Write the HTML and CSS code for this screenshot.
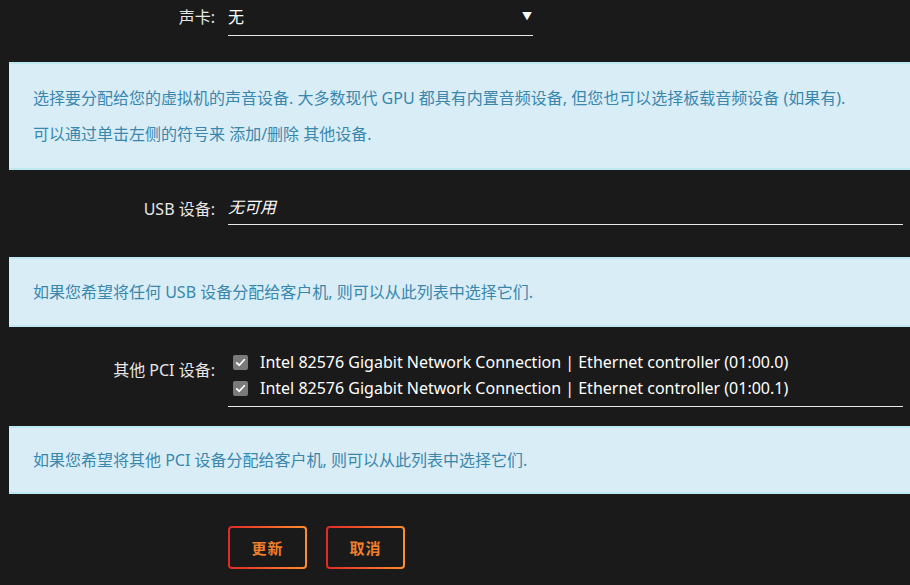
FILE: index.html
```html
<!DOCTYPE html>
<html lang="zh">
<head>
<meta charset="utf-8">
<link rel="stylesheet" href="styles.css">
</head>
<body>
<div class="page">
  <div class="row row-sound">
    <div class="label">声卡:</div>
    <div class="value select">
      <span>无</span>
      <span class="arrow">▼</span>
    </div>
  </div>

  <div class="info info-two">
    <p>选择要分配给您的虚拟机的声音设备. 大多数现代 GPU 都具有内置音频设备, 但您也可以选择板载音频设备 (如果有).</p>
    <p>可以通过单击左侧的符号来 添加/删除 其他设备.</p>
  </div>

  <div class="row row-usb">
    <div class="label">USB 设备:</div>
    <div class="value wide"><em>无可用</em></div>
  </div>

  <div class="info info-usb">
    <p>如果您希望将任何 USB 设备分配给客户机, 则可以从此列表中选择它们.</p>
  </div>

  <div class="row row-pci">
    <div class="label">其他 PCI 设备:</div>
    <div class="value wide checks">
      <div class="check"><span class="box"><svg viewBox="0 0 16 16" width="11" height="11"><path d="M2.5 8.5 L6.2 12 L13.5 4" fill="none" stroke="#fff" stroke-width="2.6" stroke-linecap="round" stroke-linejoin="round"/></svg></span>Intel 82576 Gigabit Network Connection | Ethernet controller (01:00.0)</div>
      <div class="check"><span class="box"><svg viewBox="0 0 16 16" width="11" height="11"><path d="M2.5 8.5 L6.2 12 L13.5 4" fill="none" stroke="#fff" stroke-width="2.6" stroke-linecap="round" stroke-linejoin="round"/></svg></span>Intel 82576 Gigabit Network Connection | Ethernet controller (01:00.1)</div>
    </div>
  </div>

  <div class="info info-pci">
    <p>如果您希望将其他 PCI 设备分配给客户机, 则可以从此列表中选择它们.</p>
  </div>

  <div class="buttons">
    <button class="btn">更新</button>
    <button class="btn">取消</button>
  </div>
</div>
</body>
</html>
```

FILE: styles.css
```css
html, body {
  margin: 0;
  padding: 0;
  background: #1a1a1a;
  overflow: hidden;
}
body {
  font-family: "Noto Sans", "Noto Sans CJK SC", sans-serif;
  font-size: 16px;
  color: #f2f2f2;
}
.page {
  padding-left: 9px;
  width: 901px;
}
.row {
  display: grid;
  grid-template-columns: 206px 1fr;
  column-gap: 13px;
  align-items: start;
}
.label {
  text-align: right;
  color: #e6e6e6;
  line-height: 35px;
}
.value {
  border-bottom: 1px solid #e8e8e8;
  color: #fff;
}
.select {
  width: 305px;
  line-height: 35px;
  display: flex;
  justify-content: space-between;
  box-sizing: border-box;
}
.arrow {
  font-size: 10px;
  padding-right: 1px;
  transform: translateY(-1px);
}
.wide {
  width: 675px;
}
.row-usb {
  margin-top: 20px;
}
.row-usb .label {
  line-height: 30px;
  padding-top: 4px;
}
.row-usb .value {
  line-height: 34px;
}
.row-usb em {
  font-style: italic;
}
.row-pci {
  margin-top: 22px;
}
.row-pci .label {
  line-height: 26px;
  padding-top: 8px;
}
.checks {
  padding-bottom: 5px;
}
.check {
  display: flex;
  align-items: center;
  line-height: 26px;
  white-space: nowrap;
}
.box {
  width: 15px;
  height: 15px;
  border-radius: 2px;
  background: #7a7a7a;
  margin-left: 5px;
  margin-right: 12px;
  display: flex;
  align-items: center;
  justify-content: center;
  flex: none;
}
.info {
  background: #d9edf7;
  border-top: 2px solid #bce8f1;
  border-bottom: 2px solid #bce8f1;
  color: #3a87ad;
  padding: 15px 24px;
  font-size: 16px;
}
.info p {
  margin: 0;
  line-height: 36px;
  white-space: nowrap;
}
.info-two {
  margin-top: 26px;
  padding: 16px 24px;
}
.info-usb {
  margin-top: 32px;
}
.info-pci {
  margin-top: 19px;
  padding: 14px 24px;
}
.buttons {
  display: flex;
  gap: 19px;
  margin-top: 32px;
  margin-left: 219px;
}
.btn {
  width: 79px;
  height: 43px;
  border: 2px solid transparent;
  border-radius: 4px;
  background:
    linear-gradient(#1a1a1a, #1a1a1a) padding-box,
    linear-gradient(90deg, #e22828, #ff8f2f) border-box;
  color: #f07f2c;
  font-family: "Noto Sans CJK SC", sans-serif;
  font-weight: bold;
  font-size: 15px;
  letter-spacing: 1px;
  padding: 0;
}
```
